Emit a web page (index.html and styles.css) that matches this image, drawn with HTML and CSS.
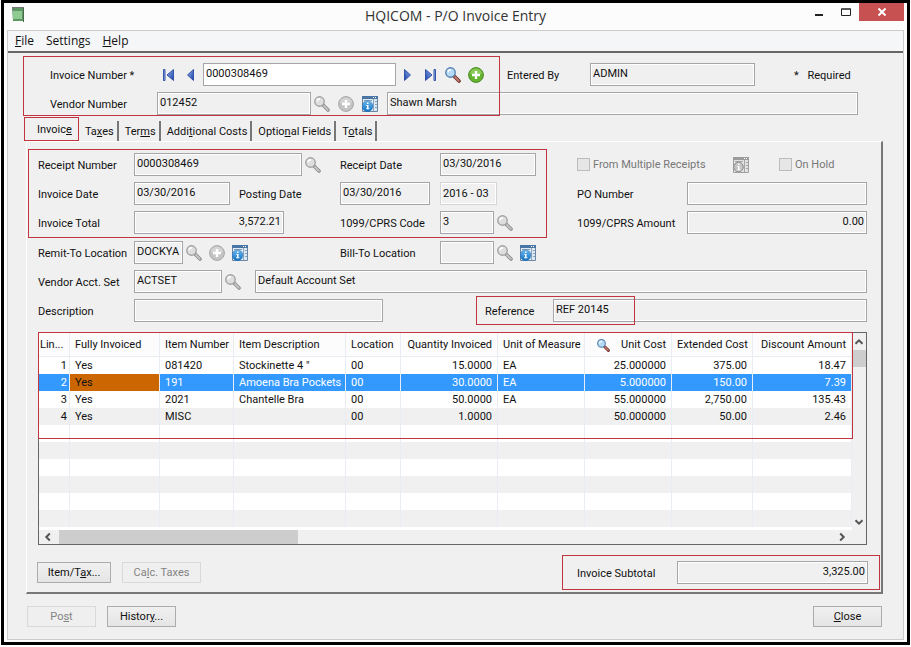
FILE: index.html
```
<!DOCTYPE html>
<html lang="en">
<head>
	<meta charset="UTF-8">
	<title>HQICOM - P/O Invoice Entry</title>
	<link rel="stylesheet" href="styles.css">
</head>
<body>
<svg class="defs" aria-hidden="true">
	<defs>
		<linearGradient id="blue" x1="0" y1="0" x2="1" y2="1">
			<stop offset="0" stop-color="#8fb4ee"/>
			<stop offset="1" stop-color="#1d3fa8"/>
		</linearGradient>
		<linearGradient id="info-bg" x1="0" y1="0" x2="0" y2="1">
			<stop offset="0" stop-color="#6db8ee"/>
			<stop offset="1" stop-color="#1273c4"/>
		</linearGradient>
		<symbol id="i-prev" viewBox="0 0 16 16">
			<path d="M10.500 2.500v11L4.500 8z" fill="url(#blue)" stroke="#3454a8"/>
		</symbol>
		<symbol id="i-first" viewBox="0 0 16 16">
			<path d="M12.500 2.500v11L6 8z" fill="url(#blue)" stroke="#3454a8"/>
			<path d="M2.500 2.500h1.500v11h-1.500z" fill="#8fb4ee" stroke="#3454a8"/>
		</symbol>
		<symbol id="i-search" viewBox="0 0 16 16">
			<path d="M9.500 9.500l4.500 4.500" stroke="#6e2f2a" stroke-width="3.600" stroke-linecap="round"/>
			<path d="M10 10l3.800 3.800" stroke="#c07a6f" stroke-width="1.800" stroke-linecap="round"/>
			<circle cx="5.500" cy="5.500" r="4.700" fill="#b4daf6" stroke="#5580b0" stroke-width="1.400"/>
			<path d="M3 5.500a3 3 0 0 1 3-2.800" fill="none" stroke="#fff" stroke-width="1.400"/>
		</symbol>
		<symbol id="i-search-off" viewBox="0 0 16 16">
			<path d="M9.500 9.500l4.500 4.500" stroke="#8e8e8e" stroke-width="3.600" stroke-linecap="round"/>
			<path d="M10 10l3.800 3.800" stroke="#c6c6c6" stroke-width="1.800" stroke-linecap="round"/>
			<circle cx="5.500" cy="5.500" r="4.700" fill="#dedede" stroke="#a2a2a2" stroke-width="1.400"/>
			<path d="M3 5.500a3 3 0 0 1 3-2.800" fill="none" stroke="#fff" stroke-width="1.400"/>
		</symbol>
		<symbol id="i-add" viewBox="0 0 16 16">
			<circle cx="8" cy="8" r="7.400" fill="#65b32e" stroke="#4b8a26"/>
			<path d="M2 7a6 5.500 0 0 1 12 0z" fill="#a2d873" opacity=".6"/>
			<path d="M8 4v8M4 8h8" stroke="#fff" stroke-width="2.400"/>
		</symbol>
		<symbol id="i-add-off" viewBox="0 0 16 16">
			<circle cx="8" cy="8" r="7.400" fill="#c4c4c4" stroke="#a6a6a6"/>
			<path d="M2 7a6 5.500 0 0 1 12 0z" fill="#dedede" opacity=".6"/>
			<path d="M8 4v8M4 8h8" stroke="#fff" stroke-width="2.400"/>
		</symbol>
		<symbol id="i-info" viewBox="0 0 16 16">
			<path d="M.5.500h15v15H.5z" fill="#dce9f5" stroke="#6a86a3"/>
			<path d="M0 0h16v3H0z" fill="#4a76a6"/>
			<path d="M11 1h1v1h-1zM13 1h1v1h-1z" fill="#fff"/>
			<path d="M11.500 3v12M13 5.500h2M13 8.500h2M13 11.500h2M2 4.500h8" stroke="#8aa3bd"/>
			<circle cx="5.500" cy="10.200" r="5.300" fill="url(#info-bg)" stroke="#1c6cb4" stroke-width=".6"/>
			<path d="M5 6.500h1.500V8H5zM4.300 9h2.200v3.300h.9v1H4.200v-1H5V10h-.7z" fill="#fff"/>
		</symbol>
		<symbol id="i-info-off" viewBox="0 0 16 16">
			<path d="M.5.500h15v15H.5z" fill="#e2e2e2" stroke="#a0a0a0"/>
			<path d="M0 0h16v3H0z" fill="#9c9c9c"/>
			<path d="M11 1h1v1h-1zM13 1h1v1h-1z" fill="#fff"/>
			<path d="M11.500 3v12M13 5.500h2M13 8.500h2M13 11.500h2M2 4.500h8" stroke="#a6a6a6"/>
			<circle cx="5.500" cy="10" r="4.800" fill="#c4c4c4" stroke="#8e8e8e"/>
			<path d="M5 6.500h1.500V8H5zM4.300 9h2.200v3.300h.9v1H4.200v-1H5V10h-.7z" fill="#fff"/>
		</symbol>
		<symbol id="i-arrow" viewBox="0 0 10 10">
			<path d="M1.500 6.800L5 3.300l3.500 3.500" fill="none" stroke="#555" stroke-width="2"/>
		</symbol>
	</defs>
</svg>

<div class="window">
	<div class="titlebar">
		<svg class="app-icon" viewBox="0 0 13 16">
			<path d="M0 1h12v13H1z" fill="#5d9763"/>
			<path d="M1 4h9v8H1z" fill="#8fca90"/>
			<path d="M0 .5h12M1.500 1v3" stroke="#777" fill="none"/>
			<path d="M11.500 1v14" stroke="#456b4a"/>
		</svg>
		<h1>HQICOM - P/O Invoice Entry</h1>
		<div class="win-btns">
			<button type="button" aria-label="Minimize"><svg width="10" height="10"><path d="M1 7h8v2H1z" fill="#222"/></svg></button>
			<button type="button" aria-label="Maximize"><svg width="10" height="8"><path d="M.5 1h9v6.500h-9zM0 1h10" fill="none" stroke="#222"/></svg></button>
			<button type="button" class="win-close" aria-label="Close window"><svg width="8" height="8"><path d="M.5.500l7 7M7.500.500l-7 7" stroke="#fff" stroke-width="2"/></svg></button>
		</div>
	</div>

	<div class="client">
		<nav class="menu">
			<a href="#"><u>F</u>ile</a>
			<a href="#">Settings</a>
			<a href="#"><u>H</u>elp</a>
		</nav>

		<div class="head">
			<div class="head-row">
				<label class="head-label" for="invoice-no">Invoice Number *</label>
				<div class="nav-btns">
					<button type="button" class="icon" aria-label="First"><svg><use href="#i-first"/></svg></button>
					<button type="button" class="icon" aria-label="Previous"><svg><use href="#i-prev"/></svg></button>
				</div>
				<input type="text" id="invoice-no" class="field active w-invoice" value="0000308469">
				<div class="nav-btns after">
					<button type="button" class="icon" aria-label="Next"><svg class="flip"><use href="#i-prev"/></svg></button>
					<button type="button" class="icon" aria-label="Last"><svg class="flip"><use href="#i-first"/></svg></button>
					<button type="button" class="icon" aria-label="Find invoice"><svg><use href="#i-search"/></svg></button>
					<button type="button" class="icon" aria-label="New invoice"><svg><use href="#i-add"/></svg></button>
				</div>
				<label class="entered" for="entered-by">Entered By</label>
				<input type="text" id="entered-by" class="field w-entered" value="ADMIN" readonly>
				<span class="required"><span>*</span> Required</span>
			</div>
			<div class="head-row">
				<label class="head-label wide" for="vendor-no">Vendor Number</label>
				<input type="text" id="vendor-no" class="field w-vendor" value="012452" readonly>
				<div class="icons">
					<button type="button" class="icon" aria-label="Find vendor"><svg><use href="#i-search-off"/></svg></button>
					<button type="button" class="icon" aria-label="New vendor"><svg><use href="#i-add-off"/></svg></button>
					<button type="button" class="icon" aria-label="Vendor info"><svg><use href="#i-info"/></svg></button>
				</div>
				<input type="text" class="field grow vendor-name" aria-label="Vendor name" value="Shawn Marsh" readonly>
			</div>
			<div class="mark mark-head"></div>
		</div>

		<div class="tabs">
			<button type="button" class="tab current">Invoic<u>e</u></button>
			<button type="button" class="tab">Ta<u>x</u>es</button>
			<button type="button" class="tab">Ter<u>m</u>s</button>
			<button type="button" class="tab">Addi<u>t</u>ional Costs</button>
			<button type="button" class="tab">Optio<u>n</u>al Fields</button>
			<button type="button" class="tab">T<u>o</u>tals</button>
		</div>

		<div class="panel">
			<div class="rows receipt">
				<div class="row">
					<label for="receipt-no">Receipt Number</label>
					<div class="cell">
						<input type="text" id="receipt-no" class="field w-receipt" value="0000308469" readonly>
						<button type="button" class="icon" aria-label="Find receipt"><svg><use href="#i-search-off"/></svg></button>
					</div>
					<label for="receipt-date">Receipt Date</label>
					<div class="cell">
						<input type="text" id="receipt-date" class="field w-date" value="03/30/2016" readonly>
					</div>
					<div class="cell">
						<label class="check check-multi"><input type="checkbox" disabled>From Multiple Receipts</label>
						<button type="button" class="icon multi" aria-label="Receipts" disabled><svg><use href="#i-info-off"/></svg></button>
						<label class="check check-hold"><input type="checkbox" disabled>On Hold</label>
					</div>
				</div>
				<div class="row">
					<label for="invoice-date">Invoice Date</label>
					<div class="cell">
						<input type="text" id="invoice-date" class="field w-date" value="03/30/2016" readonly>
						<label class="posting" for="posting-date">Posting Date</label>
					</div>
					<input type="text" id="posting-date" class="field w-posting" value="03/30/2016" readonly>
					<div class="cell">
						<input type="text" class="field period" aria-label="Fiscal period" value="2016 - 03" readonly>
					</div>
					<div class="cell">
						<label class="right-label" for="po-no">PO Number</label>
						<input type="text" id="po-no" class="field grow" readonly>
					</div>
				</div>
				<div class="row">
					<label for="invoice-total">Invoice Total</label>
					<div class="cell">
						<input type="text" id="invoice-total" class="field num w-total" value="3,572.21" readonly>
					</div>
					<label for="cprs-code">1099/CPRS Code</label>
					<div class="cell">
						<input type="text" id="cprs-code" class="field w-code" value="3" readonly>
						<button type="button" class="icon" aria-label="Find code"><svg><use href="#i-search-off"/></svg></button>
					</div>
					<div class="cell">
						<label class="right-label" for="cprs-amount">1099/CPRS Amount</label>
						<input type="text" id="cprs-amount" class="field num grow" value="0.00" readonly>
					</div>
				</div>
				<div class="mark mark-receipt"></div>
			</div>
			<div class="rows">
				<div class="row">
					<label for="remit-to">Remit-To Location</label>
					<div class="cell">
						<input type="text" id="remit-to" class="field w-remit" value="DOCKYA" readonly>
						<button type="button" class="icon" aria-label="Find remit-to"><svg><use href="#i-search-off"/></svg></button>
						<button type="button" class="icon next" aria-label="New remit-to"><svg><use href="#i-add-off"/></svg></button>
						<button type="button" class="icon next" aria-label="Remit-to info"><svg><use href="#i-info"/></svg></button>
					</div>
					<label for="bill-to">Bill-To Location</label>
					<div class="cell">
						<input type="text" id="bill-to" class="field w-code" readonly>
						<button type="button" class="icon" aria-label="Find bill-to"><svg><use href="#i-search-off"/></svg></button>
						<button type="button" class="icon next" aria-label="Bill-to info"><svg><use href="#i-info"/></svg></button>
					</div>
				</div>
				<div class="row row-acct">
					<label for="acct-set">Vendor Acct. Set</label>
					<div class="cell">
						<input type="text" id="acct-set" class="field w-acct" value="ACTSET" readonly>
						<button type="button" class="icon" aria-label="Find account set"><svg><use href="#i-search-off"/></svg></button>
					</div>
					<input type="text" class="field" aria-label="Account set name" value="Default Account Set" readonly>
				</div>
				<div class="row row-desc">
					<label for="description">Description</label>
					<div class="cell">
						<input type="text" id="description" class="field w-desc" readonly>
					</div>
					<div class="reference">
						<label for="reference">Reference</label>
						<input type="text" id="reference" class="field grow" value="REF 20145" readonly>
						<div class="mark mark-reference"></div>
					</div>
				</div>
			</div>

			<div class="grid">
				<div class="grid-main">
					<div class="table-wrap">
						<table>
							<colgroup>
								<col class="c-line"><col class="c-full"><col class="c-item"><col class="c-desc"><col class="c-loc">
								<col class="c-qty"><col class="c-unit"><col class="c-cost"><col class="c-ext"><col>
							</colgroup>
							<thead>
								<tr>
									<th class="line">Lin...</th>
									<th>Fully Invoiced</th>
									<th>Item Number</th>
									<th>Item Description</th>
									<th>Location</th>
									<th class="num">Quantity Invoiced</th>
									<th>Unit of Measure</th>
									<th><div class="th-find"><svg class="find"><use href="#i-search"/></svg>Unit Cost</div></th>
									<th class="num">Extended Cost</th>
									<th class="num">Discount Amount</th>
								</tr>
							</thead>
							<tbody>
								<tr><td>1</td><td>Yes</td><td>081420</td><td>Stockinette 4 "</td><td>00</td><td class="num">15.0000</td><td>EA</td><td class="num">25.000000</td><td class="num">375.00</td><td class="num">18.47</td></tr>
								<tr class="selected"><td>2</td><td class="focus">Yes</td><td>191</td><td>Amoena Bra Pockets</td><td>00</td><td class="num">30.0000</td><td>EA</td><td class="num">5.000000</td><td class="num">150.00</td><td class="num">7.39</td></tr>
								<tr><td>3</td><td>Yes</td><td>2021</td><td>Chantelle Bra</td><td>00</td><td class="num">50.0000</td><td>EA</td><td class="num">55.000000</td><td class="num">2,750.00</td><td class="num">135.43</td></tr>
								<tr><td>4</td><td>Yes</td><td>MISC</td><td></td><td>00</td><td class="num">1.0000</td><td></td><td class="num">50.000000</td><td class="num">50.00</td><td class="num">2.46</td></tr>
								<tr><td></td><td></td><td></td><td></td><td></td><td></td><td></td><td></td><td></td><td></td></tr>
								<tr><td></td><td></td><td></td><td></td><td></td><td></td><td></td><td></td><td></td><td></td></tr>
								<tr><td></td><td></td><td></td><td></td><td></td><td></td><td></td><td></td><td></td><td></td></tr>
								<tr><td></td><td></td><td></td><td></td><td></td><td></td><td></td><td></td><td></td><td></td></tr>
								<tr><td></td><td></td><td></td><td></td><td></td><td></td><td></td><td></td><td></td><td></td></tr>
								<tr><td></td><td></td><td></td><td></td><td></td><td></td><td></td><td></td><td></td><td></td></tr>
							</tbody>
						</table>
						<div class="mark mark-grid"></div>
					</div>
					<div class="vscroll">
						<svg class="arrow"><use href="#i-arrow"/></svg>
						<div class="vthumb"></div>
						<svg class="arrow down"><use href="#i-arrow"/></svg>
					</div>
				</div>
				<div class="hscroll">
					<svg class="arrow left"><use href="#i-arrow"/></svg>
					<div class="htrack"><div class="hthumb"></div></div>
					<svg class="arrow right"><use href="#i-arrow"/></svg>
				</div>
			</div>

			<div class="panel-foot">
				<button type="button" class="btn w-item">Item/T<u>a</u>x...</button>
				<button type="button" class="btn w-calc" disabled>Ca<u>l</u>c. Taxes</button>
				<div class="subtotal">
					<label for="subtotal">Invoice Subtotal</label>
					<input type="text" id="subtotal" class="field num w-subtotal" value="3,325.00" readonly>
				</div>
			</div>
		</div>

		<div class="foot">
			<button type="button" class="btn" disabled>Po<u>s</u>t</button>
			<button type="button" class="btn">Histor<u>y</u>...</button>
			<button type="button" class="btn btn-end"><u>C</u>lose</button>
		</div>
	</div>
</div>
</body>
</html>
```
FILE: styles.css
```
* {
	box-sizing: border-box
}
body {
	margin: 0;
	padding: 0 1px 2px;
	background: #fff;
	color: #111;
	font: 11px/16px Roboto, Arial, sans-serif;
	white-space: nowrap
}
button, input {
	margin: 0;
	font: inherit;
	color: inherit
}
label {
	padding-top: 2px
}
u {
	text-underline-offset: 1px
}
.defs {
	position: absolute;
	width: 0;
	height: 0
}

/* window */
.window {
	min-width: 908px;
	padding: 0 3px 2px;
	border: 3px solid #000;
	background: #fcfcfc
}
.titlebar {
	display: grid;
	grid-template-columns: 1fr auto 1fr;
	height: 27px
}
.titlebar h1 {
	margin: 0;
	color: #333;
	font: 14px/26px "Open Sans", sans-serif
}
.app-icon {
	width: 13px;
	height: 16px;
	margin: 4px 0 0 5px
}
.win-btns {
	display: flex;
	justify-content: flex-end
}
.win-btns button {
	display: flex;
	align-items: center;
	justify-content: center;
	width: 27px;
	height: 18px;
	padding: 0;
	border: 0;
	background: none
}
.win-btns .win-close {
	width: 45px;
	background: #c75050
}
.client {
	border: 1px solid #ccc;
	background: #f0f0f0
}
.menu {
	display: flex;
	gap: 12px;
	height: 22px;
	padding: 0 7px;
	border-bottom: 2px solid #666;
	background: #f5f6f7;
	font: 12px/20px "Open Sans", sans-serif
}
.menu a {
	color: #111;
	text-decoration: none
}

/* fields and icons */
.field {
	flex: none;
	min-width: 0;
	height: 23px;
	padding: 0 2px 3px;
	border: 1px solid #a5a5a8;
	border-radius: 0;
	outline: 0;
	box-shadow: inset 0 0 0 1px #fff;
	background: #f0f0f0
}
.field.active {
	background: #fff
}
.field.grow {
	flex: 1
}
.num {
	text-align: right
}
.icon {
	flex: none;
	width: 16px;
	height: 16px;
	padding: 0;
	border: 0;
	background: none
}
.icon svg {
	display: block;
	width: 16px;
	height: 16px
}
.flip {
	transform: scaleX(-1)
}
.mark {
	position: absolute;
	border: 1px solid #c0353f;
	pointer-events: none
}

/* header */
.head {
	position: relative;
	display: grid;
	gap: 6px;
	padding: 10px 45px 0 42px
}
.head-row {
	display: flex;
	align-items: center
}
.head-label {
	width: 111px
}
.head-label.wide {
	width: 107px
}
.nav-btns {
	display: flex;
	gap: 6px;
	width: 42px
}
.nav-btns.after {
	gap: 7px;
	width: auto;
	margin-left: 3px
}
.w-invoice {
	width: 193px
}
.entered {
	width: 83px;
	margin-left: 23px
}
.w-entered {
	width: 165px
}
.required {
	margin-left: 39px;
	padding-top: 2px
}
.required span {
	margin-right: 6px
}
.w-vendor {
	width: 154px
}
.icons {
	display: flex;
	gap: 8px;
	margin: 0 9px 0 3px
}
.mark-head {
	top: 3px;
	left: 15px;
	width: 477px;
	height: 60px
}

/* tabs */
.tabs {
	display: flex;
	align-items: flex-end;
	height: 26px;
	padding: 2px 0 0 16px
}
.tab {
	height: 20px;
	padding: 1px 3px 0 6px;
	border: 0;
	border-right: 2px solid #777;
	background: none
}
.tab.current {
	height: 24px;
	padding: 2px 6px 0 12px;
	border: 1px solid #c0353f
}

/* panel */
.panel {
	margin: 0 20px 0 18px;
	padding: 11px 14px 2px 11px;
	border: 1px solid #fff;
	border-right: 2px solid #777;
	border-bottom: 2px solid #777
}
.rows {
	position: relative;
	display: grid;
	gap: 6px
}
.receipt {
	margin-bottom: 7px
}
.row {
	display: grid;
	grid-template-columns: 96px 206px 100px 137px 1fr;
	align-items: center
}
.row-acct {
	grid-template-columns: 96px 121px 1fr
}
.row-desc {
	grid-template-columns: 96px 351px 1fr
}
.cell, .reference {
	display: flex;
	align-items: center
}
.cell .icon {
	margin-left: 3px
}
.cell .icon.next {
	margin-left: 7px
}
.w-receipt {
	width: 168px
}
.w-date {
	width: 96px
}
.w-posting {
	width: 90px
}
.w-total {
	width: 150px
}
.w-code {
	width: 54px
}
.w-remit {
	width: 49px
}
.w-acct {
	width: 88px
}
.w-desc {
	width: 249px
}
.period {
	width: 57px;
	border-color: #d5d5d5;
	padding-bottom: 1px
}
.posting {
	margin-left: 9px
}
.right-label {
	width: 110px
}
.check {
	display: flex;
	align-items: center;
	gap: 3px;
	padding-top: 0;
	color: #777
}
.check input {
	appearance: none;
	width: 13px;
	height: 13px;
	border: 1px solid #bcbcbc;
	background: #e6e6e6
}
.check-multi {
	width: 153px
}
.check-hold {
	margin-left: 30px
}
.reference {
	position: relative
}
.reference label {
	width: 68px
}
.mark-receipt {
	top: -4px;
	left: -10px;
	width: 519px;
	height: 89px
}
.mark-reference {
	top: -3px;
	left: -9px;
	width: 159px;
	height: 29px
}

/* invoice lines */
.grid {
	margin-top: 10px;
	border: 1px solid #666
}
.grid-main {
	display: flex
}
.table-wrap {
	position: relative;
	flex: 1;
	height: 197px;
	background: #fff
}
table {
	width: 100%;
	table-layout: fixed;
	border-collapse: separate;
	border-spacing: 0
}
th, td {
	height: 17px;
	padding: 1px 5px 0;
	border-right: 1px solid #e8edf3;
	overflow: hidden;
	line-height: 16px;
	text-align: left
}
th {
	height: 24px;
	border-bottom: 1px solid #e8edf3;
	background: #fcfcfd;
	font-weight: normal
}
th.line {
	padding: 1px 1px 0
}
th.num, td.num {
	text-align: right
}
td:first-child {
	padding-right: 2px;
	text-align: right
}
tbody tr:nth-child(even) {
	background: #f0f0f0
}
tbody .selected:nth-child(even) {
	background: #3399ff;
	color: #fff
}
.selected .focus {
	background: #cc6600;
	color: #111
}
.c-line {
	width: 31px
}
.c-full {
	width: 90px
}
.c-item {
	width: 74px
}
.c-desc {
	width: 112px
}
.c-loc {
	width: 55px
}
.c-qty {
	width: 97px
}
.c-unit, .c-cost {
	width: 87px
}
.c-ext {
	width: 81px
}
.th-find {
	display: flex;
	align-items: center;
	justify-content: space-between;
	padding-left: 7px
}
.find {
	width: 13px;
	height: 13px
}
.mark-grid {
	top: -1px;
	left: -1px;
	right: -1px;
	height: 107px
}
.vscroll {
	display: flex;
	flex-direction: column;
	width: 14px
}
.arrow {
	flex: none;
	width: 10px;
	height: 10px;
	margin: 4px 2px 3px
}
.arrow.down {
	margin-top: auto;
	transform: rotate(180deg)
}
.vthumb {
	height: 17px;
	background: #cdcdcd
}
.hscroll {
	display: flex;
	align-items: center;
	height: 14px;
	padding: 0 16px 0 1px
}
.arrow.left {
	margin: 0 6px 0 3px;
	transform: rotate(-90deg)
}
.arrow.right {
	margin: 0 3px 0 6px;
	transform: rotate(90deg)
}
.htrack {
	flex: 1
}
.hthumb {
	width: 31%;
	height: 14px;
	background: #cdcdcd
}

/* buttons */
.btn {
	width: 69px;
	height: 21px;
	padding: 1px 0 0;
	border: 1px solid #acacac;
	background: linear-gradient(#f0f0f0, #e5e5e5)
}
.btn:disabled {
	border-color: #d9d9d9;
	background: #efefef;
	color: #838383
}
.panel-foot {
	display: flex;
	align-items: center;
	gap: 11px;
	margin: 10px -13px 0 -1px
}
.w-item {
	width: 74px
}
.w-calc {
	width: 79px
}
.subtotal {
	display: flex;
	align-items: center;
	justify-content: space-between;
	width: 318px;
	height: 35px;
	margin-left: auto;
	padding: 0 11px 0 14px;
	border: 1px solid #c0353f
}
.w-subtotal {
	width: 191px
}
.foot {
	display: flex;
	gap: 11px;
	padding: 12px 21px 12px 19px
}
.btn-end {
	margin-left: auto
}
```
